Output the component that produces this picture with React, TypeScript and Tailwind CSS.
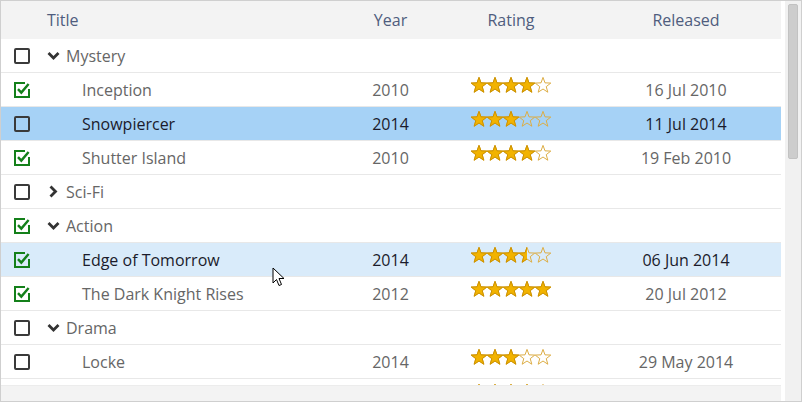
import React from "react";

type Row =
  | { kind: "group"; name: string; open: boolean; checked: boolean }
  | {
      kind: "item";
      title: string;
      year: number;
      rating: number;
      released: string;
      checked: boolean;
      state?: "selected" | "hover";
    };

const rows: Row[] = [
  { kind: "group", name: "Mystery", open: true, checked: false },
  { kind: "item", title: "Inception", year: 2010, rating: 4, released: "16 Jul 2010", checked: true },
  { kind: "item", title: "Snowpiercer", year: 2014, rating: 3, released: "11 Jul 2014", checked: false, state: "selected" },
  { kind: "item", title: "Shutter Island", year: 2010, rating: 4, released: "19 Feb 2010", checked: true },
  { kind: "group", name: "Sci-Fi", open: false, checked: false },
  { kind: "group", name: "Action", open: true, checked: true },
  { kind: "item", title: "Edge of Tomorrow", year: 2014, rating: 3.5, released: "06 Jun 2014", checked: true, state: "hover" },
  { kind: "item", title: "The Dark Knight Rises", year: 2012, rating: 5, released: "20 Jul 2012", checked: true },
  { kind: "group", name: "Drama", open: true, checked: false },
  { kind: "item", title: "Locke", year: 2014, rating: 3, released: "29 May 2014", checked: false },
];

const STAR =
  "8,0.4 10,5.85 15.8,6.07 11.23,9.65 12.82,15.23 8,12 3.18,15.23 4.77,9.65 0.2,6.07 6,5.85";

// Star rating drawn as svg, partial fill via clip
function Stars({ value, id }: { value: number; id: string }) {
  return (
    <svg width="80" height="16" viewBox="0 0 80 16" className="-mt-[9px]">
      <defs>
        <clipPath id={id}>
          <rect x="0" y="0" width={value * 16} height="16" />
        </clipPath>
      </defs>
      {[0, 1, 2, 3, 4].map((i) => (
        <polygon
          key={"e" + i}
          points={STAR}
          transform={`translate(${i * 16} 0)`}
          fill="none"
          stroke="#dcad45"
          strokeWidth="1"
          strokeLinejoin="round"
        />
      ))}
      <g clipPath={`url(#${id})`}>
        {[0, 1, 2, 3, 4].map((i) => (
          <polygon
            key={"f" + i}
            points={STAR}
            transform={`translate(${i * 16} 0)`}
            fill="#f2b300"
            stroke="#cc9200"
            strokeWidth="1"
            strokeLinejoin="round"
          />
        ))}
      </g>
    </svg>
  );
}

function Check({ checked }: { checked: boolean }) {
  if (!checked)
    return <div className="w-4 h-4 border-2 border-[#3a3a3a] rounded-[2px]" />;
  return (
    <svg width="16" height="16" viewBox="0 0 16 16">
      <path d="M15 7 V15 H1 V1 H11" fill="none" stroke="#14801a" strokeWidth="2" />
      <path d="M4 7.2 L7.3 10.6 L14.6 2" fill="none" stroke="#14801a" strokeWidth="2.4" />
    </svg>
  );
}

function Chevron({ open }: { open: boolean }) {
  return open ? (
    <svg width="13" height="10" viewBox="0 0 13 10" className="mr-[6px]">
      <path d="M1.5 2 L6.5 7 L11.5 2" fill="none" stroke="#333" strokeWidth="2.8" />
    </svg>
  ) : (
    <svg width="13" height="13" viewBox="0 0 13 13" className="mr-[6px]">
      <path d="M3.5 1.5 L8.5 6.5 L3.5 11.5" fill="none" stroke="#333" strokeWidth="2.8" />
    </svg>
  );
}

export default function App() {
  const cell = "h-full flex items-center border-b border-[#e8e8e8]";
  return (
    <div
      className="w-[802px] h-[402px] border border-[#cfcfcf] bg-white flex relative overflow-hidden"
      style={{ fontFamily: '"Open Sans", "Noto Sans", sans-serif' }}
    >
      <div className="w-[780px] flex flex-col">
        {/* Header */}
        <div className="h-[38px] flex bg-[#f3f3f3] text-[16px] text-[#4f5d7e] shrink-0">
          <div className="w-[39px]" />
          <div className="w-[310px] flex items-center pl-[7px]">Title</div>
          <div className="w-[81px] flex items-center justify-center">Year</div>
          <div className="w-[160px] flex items-center justify-center">Rating</div>
          <div className="w-[190px] flex items-center justify-center">Released</div>
        </div>

        {/* Body */}
        <div className="h-[346px] overflow-hidden text-[16px]">
          {rows.map((r, idx) => {
            const bg =
              r.kind === "item" && r.state === "selected"
                ? "bg-[#a6d2f6]"
                : r.kind === "item" && r.state === "hover"
                ? "bg-[#d9ebfa]"
                : "bg-white";
            const txt = r.kind === "item" && r.state ? "text-[#1b1b2b]" : "text-[#666666]";
            return (
              <div key={idx} className={`h-[34px] flex ${bg} ${txt}`}>
                <div className={`${cell} w-[39px] justify-center pl-[2px]`}>
                  <Check checked={r.checked} />
                </div>
                {r.kind === "group" ? (
                  <>
                    <div className={`${cell} w-[310px] pl-[7px]`}>
                      <Chevron open={r.open} />
                      <span>{r.name}</span>
                    </div>
                    <div className={`${cell} w-[81px]`} />
                    <div className={`${cell} w-[160px]`} />
                    <div className={`${cell} w-[190px]`} />
                  </>
                ) : (
                  <>
                    <div className={`${cell} w-[310px] pl-[42px]`}>{r.title}</div>
                    <div className={`${cell} w-[81px] justify-center`}>{r.year}</div>
                    <div className={`${cell} w-[160px] justify-center`}>
                      <Stars value={r.rating} id={"clip" + idx} />
                    </div>
                    <div className={`${cell} w-[190px] justify-center`}>{r.released}</div>
                  </>
                )}
              </div>
            );
          })}
          {/* next row, only its top edge peeks out */}
          <div className="h-[34px] flex">
            <div className="w-[39px]" />
            <div className="w-[310px]" />
            <div className="w-[81px]" />
            <div className="w-[160px] h-full flex items-center justify-center">
              <Stars value={4} id="clipLast" />
            </div>
          </div>
        </div>

        {/* Horizontal scroll strip */}
        <div className="h-[16px] bg-[#f3f3f3] border-t border-[#ececec] shrink-0" />
      </div>

      {/* Vertical scrollbar */}
      <div className="flex-1 flex justify-end">
        <div className="w-[16px] h-full bg-[#f1f1f1] pt-[3px] pl-[3px]">
          <div className="w-[10px] h-[155px] bg-[#cdcdcd] border border-[#c2c2c2] rounded-[2px]" />
        </div>
      </div>

      {/* Mouse cursor */}
      <svg
        width="14"
        height="21"
        viewBox="0 0 14 21"
        className="absolute left-[271px] top-[266px] pointer-events-none"
      >
        <path
          d="M1 1 L1 16 L4.5 12.5 L7 18.5 L9.5 17.5 L7 11.5 L12 11.5 Z"
          fill="#ffffff"
          stroke="#000000"
          strokeWidth="1"
          strokeLinejoin="round"
        />
      </svg>
    </div>
  );
}
